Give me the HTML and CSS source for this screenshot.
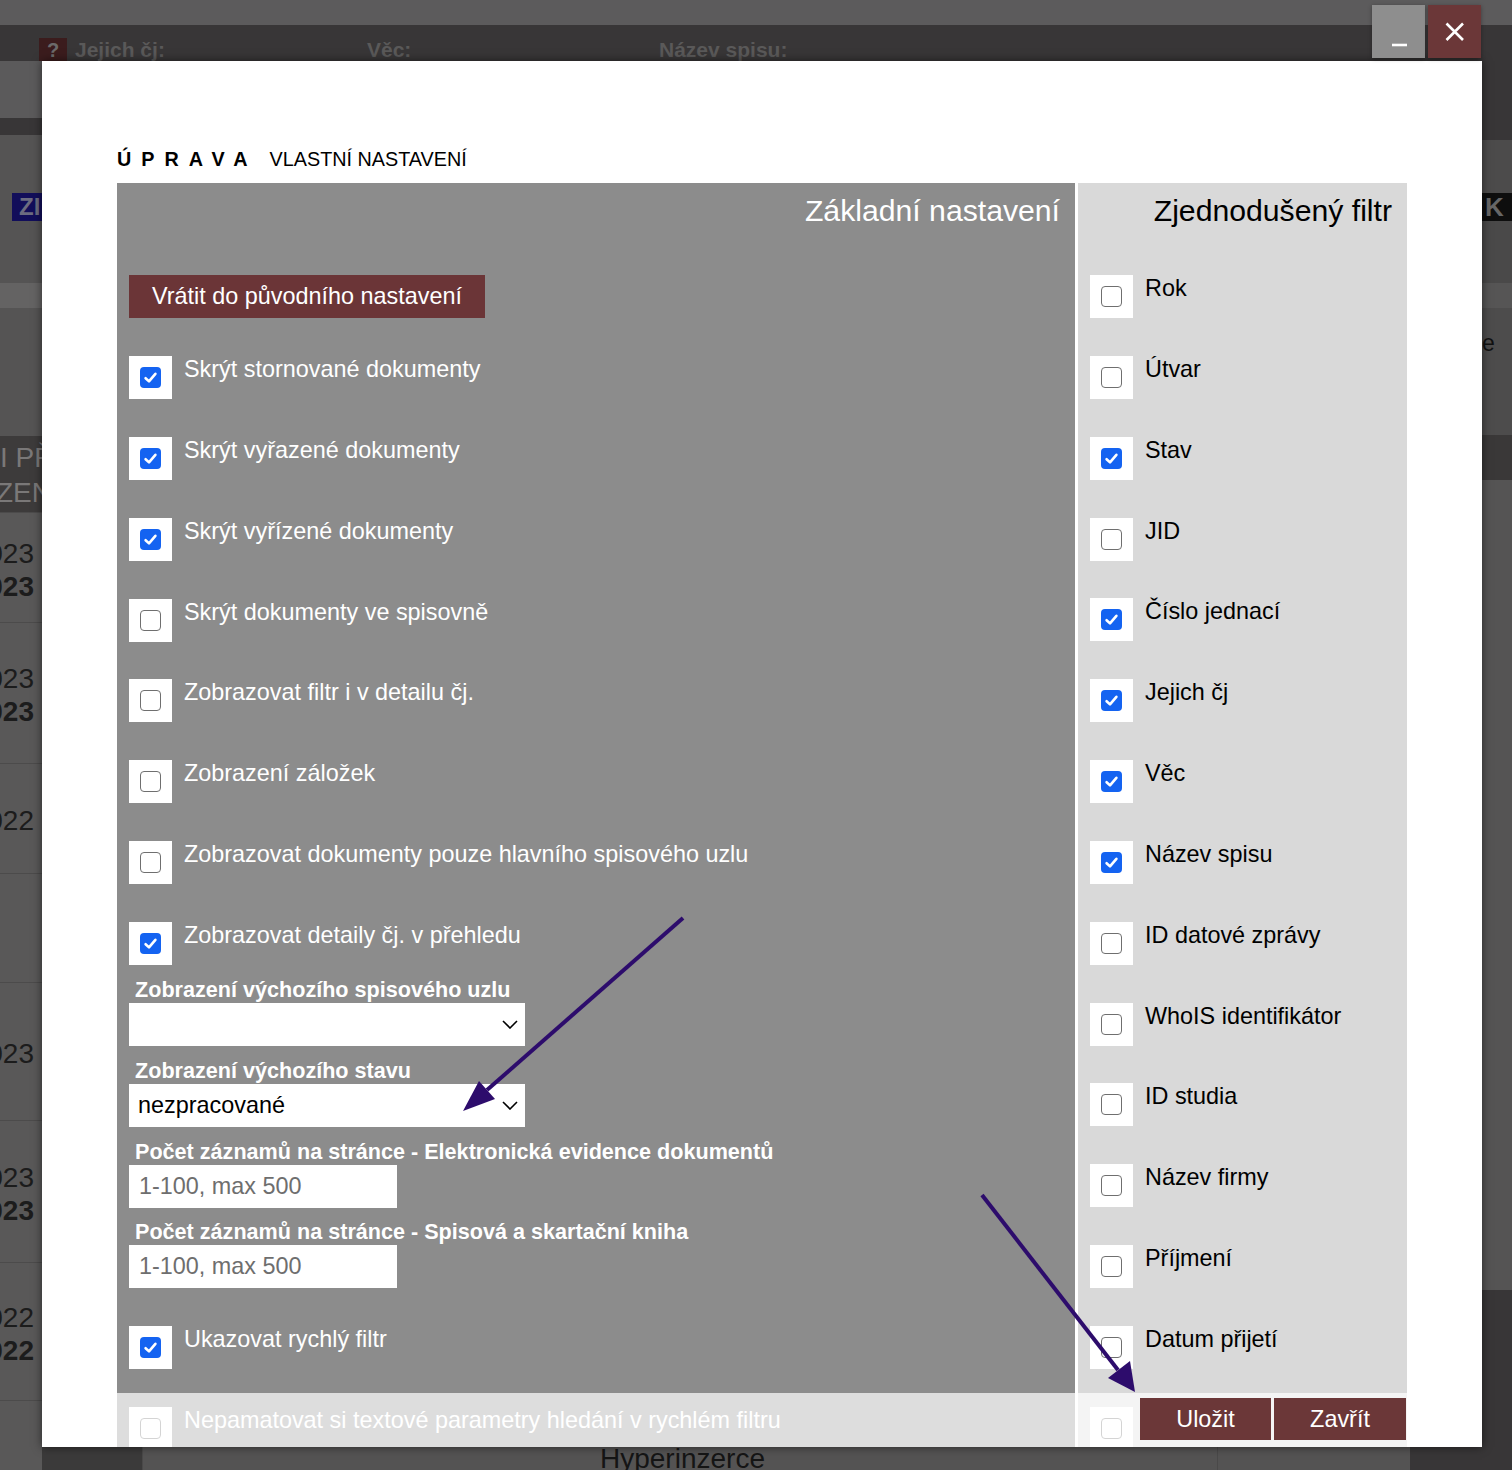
FILE: index.html
```html
<!DOCTYPE html>
<html lang="cs">
<head>
<meta charset="utf-8">
<title>Úprava – vlastní nastavení</title>
<link rel="stylesheet" href="styles.css">
</head>
<body>
<div class="backdrop">
  <div class="bg-top"></div>
  <div class="bg-head">
    <span class="bg-q">?</span>
    <span class="bg-lbl w1">Jejich čj:</span>
    <span class="bg-lbl w2">Věc:</span>
    <span class="bg-lbl">Název spisu:</span>
  </div>
  <div class="bg-body">
    <div class="bg-left">
      <div class="l1"></div>
      <div class="l2"></div>
      <div class="l3"><span class="zi">ZI</span></div>
      <div class="l4"></div>
      <div class="l5"></div>
      <div class="l6"><div class="cut">I PŘÍ</div><div class="cut cut2">ZENÍ</div></div>
      <div class="yr r110"><span>2023</span><b>2023</b></div>
      <div class="yr r141"><span>2023</span><b>2023</b></div>
      <div class="yr r110"><span>2022</span></div>
      <div class="yr r109"></div>
      <div class="yr r138"><span>2023</span></div>
      <div class="yr r142"><span>2023</span><b>2023</b></div>
      <div class="yr r138"><span>2022</span><b>2022</b></div>
      <div class="yr rest"></div>
    </div>
    <div class="bg-mid">
      <div class="mid-fill"></div>
      <div class="mid-bottom">
        <div class="mb-a"></div>
        <div class="mb-b">Hyperinzerce</div>
        <div class="mb-c"></div>
        <div class="mb-d"></div>
      </div>
    </div>
    <div class="bg-right">
      <div class="q1"></div>
      <div class="q2"></div>
      <div class="q3"><span>K</span></div>
      <div class="q4"></div>
      <div class="q5"></div>
      <div class="q6"><span>e</span></div>
      <div class="q7"></div>
      <div class="q8"></div>
      <div class="q9"></div>
    </div>
  </div>
</div>

<div class="modal">
  <h1 class="heading"><span class="upr">ÚPRAVA</span><span>VLASTNÍ NASTAVENÍ</span></h1>
  <div class="panels">
    <section class="panel main">
      <h2 class="panel-title">Základní nastavení</h2>
      <button class="reset">Vrátit do původního nastavení</button>
      <div class="list">
        <label class="opt"><span class="box"><span class="cb on"><svg viewBox="0 0 21 21"><path d="M5.6 11.2 L9 14.4 L15.4 6.8"/></svg></span></span><span>Skrýt stornované dokumenty</span></label>
        <label class="opt"><span class="box"><span class="cb on"><svg viewBox="0 0 21 21"><path d="M5.6 11.2 L9 14.4 L15.4 6.8"/></svg></span></span><span>Skrýt vyřazené dokumenty</span></label>
        <label class="opt"><span class="box"><span class="cb on"><svg viewBox="0 0 21 21"><path d="M5.6 11.2 L9 14.4 L15.4 6.8"/></svg></span></span><span>Skrýt vyřízené dokumenty</span></label>
        <label class="opt"><span class="box"><span class="cb"></span></span><span>Skrýt dokumenty ve spisovně</span></label>
        <label class="opt"><span class="box"><span class="cb"></span></span><span>Zobrazovat filtr i v detailu čj.</span></label>
        <label class="opt"><span class="box"><span class="cb"></span></span><span>Zobrazení záložek</span></label>
        <label class="opt"><span class="box"><span class="cb"></span></span><span>Zobrazovat dokumenty pouze hlavního spisového uzlu</span></label>
        <label class="opt"><span class="box"><span class="cb on"><svg viewBox="0 0 21 21"><path d="M5.6 11.2 L9 14.4 L15.4 6.8"/></svg></span></span><span>Zobrazovat detaily čj. v přehledu</span></label>
      </div>
      <div class="fields">
        <div class="field-label">Zobrazení výchozího spisového uzlu</div>
        <div class="select"><span></span><svg class="chev" viewBox="0 0 16 9"><path d="M1 1 L8 8 L15 1"/></svg></div>
        <div class="field-label">Zobrazení výchozího stavu</div>
        <div class="select"><span>nezpracované</span><svg class="chev" viewBox="0 0 16 9"><path d="M1 1 L8 8 L15 1"/></svg></div>
        <div class="field-label">Počet záznamů na stránce - Elektronická evidence dokumentů</div>
        <input class="num" type="text" placeholder="1-100, max 500">
        <div class="field-label">Počet záznamů na stránce - Spisová a skartační kniha</div>
        <input class="num last" type="text" placeholder="1-100, max 500">
      </div>
      <div class="list second">
        <label class="opt"><span class="box"><span class="cb on"><svg viewBox="0 0 21 21"><path d="M5.6 11.2 L9 14.4 L15.4 6.8"/></svg></span></span><span>Ukazovat rychlý filtr</span></label>
        <label class="opt"><span class="box"><span class="cb"></span></span><span>Nepamatovat si textové parametry hledání v rychlém filtru</span></label>
      </div>
    </section>
    <section class="panel filter">
      <h2 class="panel-title">Zjednodušený filtr</h2>
      <div class="list">
        <label class="opt"><span class="box"><span class="cb"></span></span><span>Rok</span></label>
        <label class="opt"><span class="box"><span class="cb"></span></span><span>Útvar</span></label>
        <label class="opt"><span class="box"><span class="cb on"><svg viewBox="0 0 21 21"><path d="M5.6 11.2 L9 14.4 L15.4 6.8"/></svg></span></span><span>Stav</span></label>
        <label class="opt"><span class="box"><span class="cb"></span></span><span>JID</span></label>
        <label class="opt"><span class="box"><span class="cb on"><svg viewBox="0 0 21 21"><path d="M5.6 11.2 L9 14.4 L15.4 6.8"/></svg></span></span><span>Číslo jednací</span></label>
        <label class="opt"><span class="box"><span class="cb on"><svg viewBox="0 0 21 21"><path d="M5.6 11.2 L9 14.4 L15.4 6.8"/></svg></span></span><span>Jejich čj</span></label>
        <label class="opt"><span class="box"><span class="cb on"><svg viewBox="0 0 21 21"><path d="M5.6 11.2 L9 14.4 L15.4 6.8"/></svg></span></span><span>Věc</span></label>
        <label class="opt"><span class="box"><span class="cb on"><svg viewBox="0 0 21 21"><path d="M5.6 11.2 L9 14.4 L15.4 6.8"/></svg></span></span><span>Název spisu</span></label>
        <label class="opt"><span class="box"><span class="cb"></span></span><span>ID datové zprávy</span></label>
        <label class="opt"><span class="box"><span class="cb"></span></span><span>WhoIS identifikátor</span></label>
        <label class="opt"><span class="box"><span class="cb"></span></span><span>ID studia</span></label>
        <label class="opt"><span class="box"><span class="cb"></span></span><span>Název firmy</span></label>
        <label class="opt"><span class="box"><span class="cb"></span></span><span>Příjmení</span></label>
        <label class="opt"><span class="box"><span class="cb"></span></span><span>Datum přijetí</span></label>
        <div class="opt"><span class="box"><span class="cb"></span></span></div>
      </div>
    </section>
  </div>
  <div class="footer">
    <button class="btn save">Uložit</button>
    <button class="btn close">Zavřít</button>
  </div>
</div>

<div class="winctl">
  <div class="wbtn min"><svg viewBox="0 0 53 53"><path d="M20 40 H35"/></svg></div>
  <div class="wbtn cls"><svg viewBox="0 0 53 53"><path d="M18.5 18.5 L35 35 M35 18.5 L18.5 35"/></svg></div>
</div>

<svg class="arrows" viewBox="0 0 1512 1470">
  <line x1="683" y1="918" x2="487" y2="1090"/>
  <polygon points="463,1111 495,1099 479,1081"/>
  <line x1="982" y1="1195" x2="1118" y2="1370"/>
  <polygon points="1135,1392 1108,1378 1130,1361"/>
</svg>
</body>
</html>
```
FILE: styles.css
```css
* { box-sizing: border-box; }
html, body { margin: 0; padding: 0; }
body {
  width: 1512px;
  height: 1470px;
  overflow: hidden;
  position: relative;
  background: #555454;
  font-family: "Liberation Sans", Arial, Helvetica, sans-serif;
}

/* ---------- dimmed background page ---------- */
.backdrop { display: flex; flex-direction: column; height: 1470px; }
.bg-top { flex: none; height: 25px; background: #5c5b5c; }
.bg-head {
  flex: none; height: 36px; background: #383637; overflow: hidden;
  display: flex; align-items: flex-start; padding: 13px 0 0 39px;
}
.bg-q {
  width: 28px; height: 24px; background: #3b1c1d; color: #6b6a6a;
  font-weight: bold; font-size: 20px; line-height: 24px; text-align: center;
}
.bg-lbl { font-weight: bold; font-size: 21px; line-height: 24px; color: #5a5959; white-space: nowrap; }
.bg-lbl.w1 { margin-left: 8px; width: 292px; }
.bg-lbl.w2 { width: 292px; }

.bg-body { flex: 1; display: flex; min-height: 0; }
.bg-left { width: 42px; flex: none; display: flex; flex-direction: column; overflow: hidden; }
.bg-left > div { flex: none; }
.l1 { height: 57px; background: #5b5a5b; }
.l2 { height: 17px; background: #383637; }
.l3 { height: 148px; background: #555454; padding: 58px 0 0 12px; }
.zi {
  display: block; height: 28px; background: #120e5a; color: #6c6c80;
  font-weight: bold; font-size: 24px; line-height: 28px; padding-left: 7px; white-space: nowrap;
}
.l4 { height: 25px; background: #646363; }
.l5 { height: 128px; background: #555454; }
.l6 { height: 76px; background: #3d3b3b; padding-top: 4px; }
.cut { font-size: 28px; line-height: 35px; color: #7a7878; white-space: nowrap; margin-left: 0; }
.cut2 { margin-left: -4px; }
.yr {
  background: #595858; border-top: 1px solid #4c4b4b;
  display: flex; flex-direction: column; justify-content: center; align-items: flex-end;
  padding: 4px 8px 0 0; font-size: 28px; line-height: 33px; color: #1c1c1c; white-space: nowrap;
}
.yr b { font-weight: bold; }
.r110 { height: 110px; }
.r109 { height: 109px; }
.r141 { height: 141px; }
.r138 { height: 138px; }
.r142 { height: 142px; }
.rest { flex: 1 !important; }

.bg-mid { flex: 1; display: flex; flex-direction: column; }
.mid-fill { flex: 1; background: #555454; }
.mid-bottom { flex: none; height: 23px; display: flex; }
.mb-a { width: 100px; background: #3b3a3a; }
.mb-b {
  width: 1075px; background: #545353; border-left: 1px solid #4a4949;
  padding-left: 457px; font-size: 28px; line-height: 23px; color: #151515; white-space: nowrap; overflow: hidden;
}
.mb-c { width: 193px; background: #545353; border-left: 1px solid #4a4949; }
.mb-d { flex: 1; background: #383637; }

.bg-right { width: 30px; flex: none; display: flex; flex-direction: column; overflow: hidden; }
.bg-right > div { flex: none; }
.q1 { height: 79px; background: #383637; }
.q2 { height: 53px; background: #4c4b4b; }
.q3 { height: 28px; background: #0e0e0e; color: #666; font-weight: bold; font-size: 26px; line-height: 28px; padding-left: 3px; }
.q4 { height: 62px; background: #4a4949; }
.q5 { height: 25px; background: #565555; }
.q6 { height: 127px; background: #4d4c4c; padding-top: 22px; font-size: 23px; line-height: 26px; color: #111; }
.q7 { height: 45px; background: #3a3838; }
.q8 { height: 810px; background: #555454; }
.q9 { flex: 1 !important; background: #383637; }

/* ---------- modal ---------- */
.modal {
  position: absolute; left: 42px; top: 61px; width: 1440px; height: 1386px;
  background: #fff; overflow: hidden; padding: 86px 75px 0;
  box-shadow: 0 0 9px rgba(0, 0, 0, 0.55);
}
.heading {
  margin: 0 0 12px; display: flex; font-size: 19.8px; line-height: 24px;
  font-weight: normal; color: #000;
}
.heading .upr { font-weight: bold; letter-spacing: 10px; margin-right: 12px; }

.panels { display: flex; gap: 3px; height: 1320px; }
.panel { padding: 10px 15px 0 12px; }
.panel.main { width: 958px; background: #8c8c8c; color: #fff; }
.panel.filter { width: 329px; background: #d9d9d9; color: #000; }
.panel-title {
  margin: 0 0 46px; font-size: 30.2px; line-height: 36px; font-weight: normal; text-align: right;
}
.reset {
  display: block; height: 43px; padding: 0 23px; margin: 0 0 38px; border: 0;
  background: #6b3537; color: #fff; font-family: inherit; font-size: 23.4px; line-height: 43px;
}

.list { display: flex; flex-direction: column; gap: 37.85px; }
.list.second { margin-top: 38px; }
.opt { display: flex; align-items: flex-start; gap: 12px; height: 43px; font-size: 23.4px; line-height: 26px; white-space: nowrap; }
.box { flex: none; width: 43px; height: 43px; background: #fff; display: flex; align-items: center; justify-content: center; }
.cb { width: 21px; height: 21px; border: 1.5px solid #6f6f6f; border-radius: 4px; background: #fff; display: block; }
.cb.on { border: 0; background: #1463f1; }
.cb svg { display: block; width: 21px; height: 21px; }
.cb svg path { fill: none; stroke: #fff; stroke-width: 2.6; stroke-linecap: round; stroke-linejoin: round; }

.fields { margin-top: 13px; display: flex; flex-direction: column; align-items: flex-start; }
.field-label { font-weight: bold; font-size: 21.6px; line-height: 24px; padding-left: 6px; margin-bottom: 1px; white-space: nowrap; }
.select {
  width: 396px; height: 43px; background: #fff; color: #000; margin-bottom: 13px;
  display: flex; align-items: center; justify-content: space-between;
  padding: 0 7px 0 9px; font-size: 23.4px;
}
.chev { width: 16px; height: 9px; display: block; }
.chev path { fill: none; stroke: #000; stroke-width: 1.6; }
.num {
  width: 268px; height: 43px; border: 0; outline: none; margin: 0 0 12px; padding: 0 10px;
  font-family: inherit; font-size: 23.4px; color: #000; background: #fff;
}
.num.last { margin-bottom: 0; }
.num::placeholder { color: #6e6e6e; }

.footer {
  position: absolute; left: 75px; right: 75px; bottom: 0; height: 54px;
  background: rgba(255, 255, 255, 0.7);
  display: flex; justify-content: flex-end; align-items: flex-start; gap: 3px; padding: 5px 1px 0 0;
}
.btn {
  height: 42px; border: 0; background: #6b3738; color: #fff;
  font-family: inherit; font-size: 23.4px; padding: 0;
}
.btn.save { width: 131px; }
.btn.close { width: 132px; }

/* ---------- window controls ---------- */
.winctl { position: absolute; top: 5px; left: 1372px; display: flex; gap: 3px; }
.wbtn { width: 53px; height: 53px; box-shadow: 0 1px 4px rgba(0, 0, 0, 0.35); }
.wbtn.min { background: #8e8e8e; }
.wbtn.cls { background: #6b3738; }
.wbtn svg { display: block; width: 53px; height: 53px; }
.wbtn svg path { fill: none; stroke: #fff; stroke-width: 2.6; }

/* ---------- annotation arrows ---------- */
.arrows { position: absolute; left: 0; top: 0; width: 1512px; height: 1470px; pointer-events: none; }
.arrows line { stroke: #2d0c6c; stroke-width: 4; }
.arrows polygon { fill: #2d0c6c; }
```
